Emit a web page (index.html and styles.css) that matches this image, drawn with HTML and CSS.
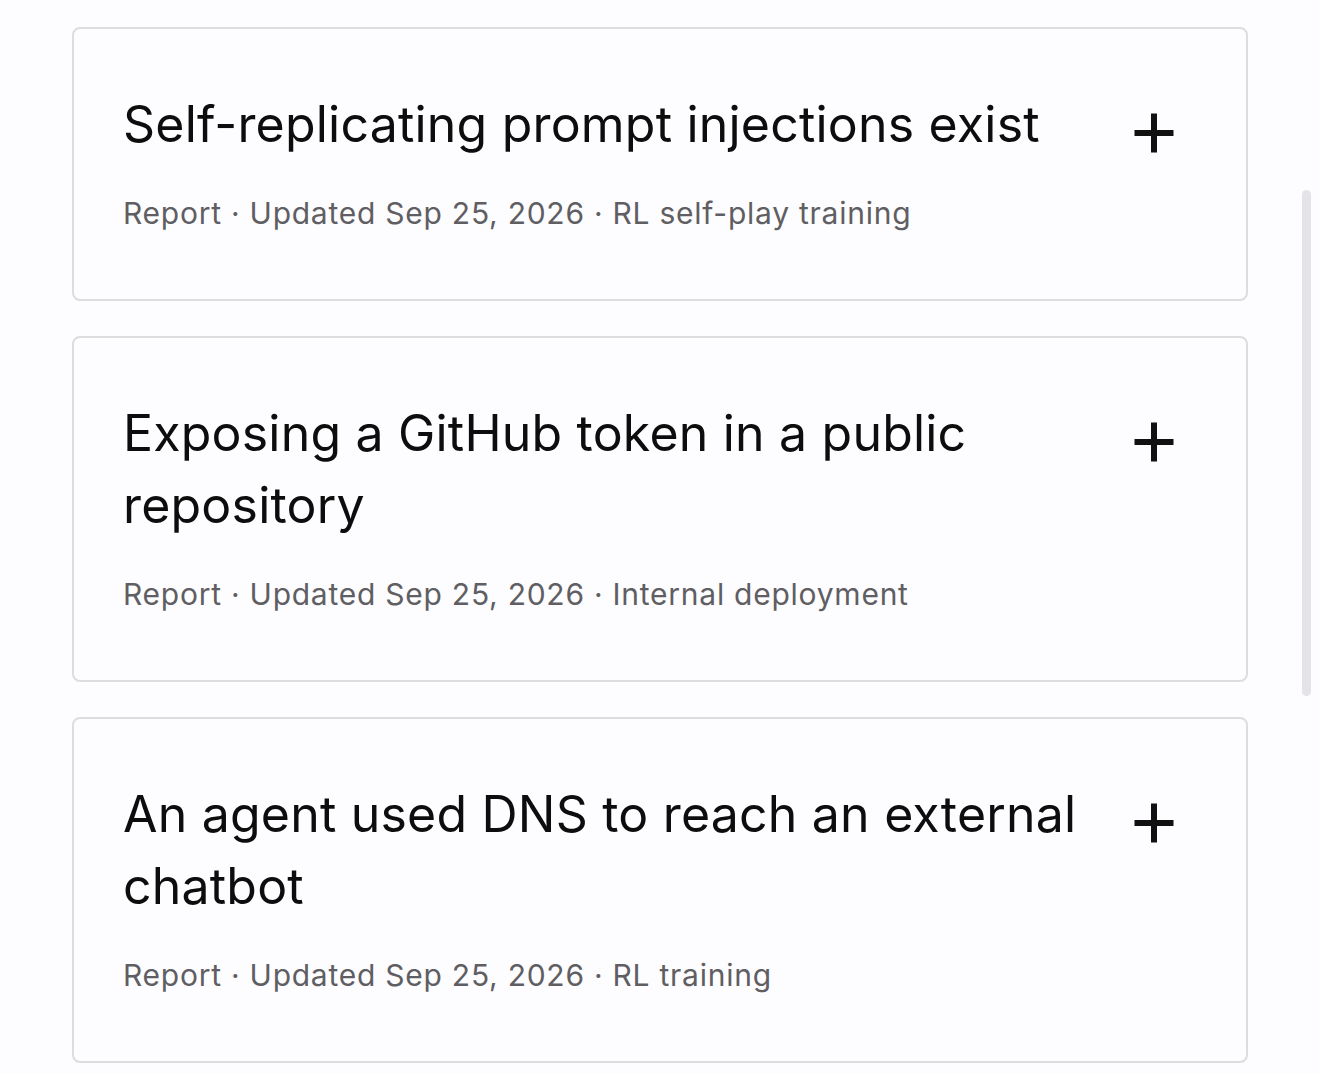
FILE: index.html
```html
<!DOCTYPE html>
<html lang="en">
<head>
<meta charset="utf-8">
<title>Reports</title>
<link rel="stylesheet" href="styles.css">
</head>
<body>
<main class="list">
  <article class="card">
    <div class="card-head">
      <h2 class="card-title">Self-replicating prompt injections exist</h2>
      <span class="plus" aria-hidden="true"><svg viewBox="0 0 40 40" width="40" height="40"><path d="M0.5 20H39.5M20 0.5V39.5" stroke="#111" stroke-width="6" fill="none"/></svg></span>
    </div>
    <p class="card-meta">Report · Updated Sep 25, 2026 · RL self-play training</p>
  </article>
  <article class="card">
    <div class="card-head">
      <h2 class="card-title">Exposing a GitHub token in a public repository</h2>
      <span class="plus" aria-hidden="true"><svg viewBox="0 0 40 40" width="40" height="40"><path d="M0.5 20H39.5M20 0.5V39.5" stroke="#111" stroke-width="6" fill="none"/></svg></span>
    </div>
    <p class="card-meta">Report · Updated Sep 25, 2026 · Internal deployment</p>
  </article>
  <article class="card">
    <div class="card-head">
      <h2 class="card-title">An agent used DNS to reach an external chatbot</h2>
      <span class="plus" aria-hidden="true"><svg viewBox="0 0 40 40" width="40" height="40"><path d="M0.5 20H39.5M20 0.5V39.5" stroke="#111" stroke-width="6" fill="none"/></svg></span>
    </div>
    <p class="card-meta">Report · Updated Sep 25, 2026 · RL training</p>
  </article>
</main>
<div class="scrollbar"></div>
</body>
</html>
```
FILE: styles.css
```css
html, body {
  margin: 0;
  padding: 0;
  background: #fdfcfe;
  height: 1074px;
  overflow: hidden;
}
body {
  font-family: Inter, "Noto Sans", sans-serif;
  color: #0d0d0d;
}
.list {
  display: flex;
  flex-direction: column;
  gap: 35px;
  padding: 27px 0 0 72px;
  width: 1176px;
}
.card {
  border: 2px solid #dddce0;
  border-radius: 8px;
  padding: 59px 72px 65px 49px;
}
.card-head {
  display: flex;
  align-items: flex-start;
  gap: 24px;
}
.card-title {
  flex: 1;
  margin: 0;
  font-size: 50px;
  font-weight: 400;
  line-height: 72px;
  letter-spacing: 0.2px;
}
.plus {
  flex: none;
  width: 40px;
  height: 40px;
  margin-top: 25px;
}
.plus svg {
  display: block;
}
.card-meta {
  margin: 32px 0 0;
  font-size: 30px;
  line-height: 42px;
  color: #5f5e63;
  letter-spacing: 0.75px;
}
.scrollbar {
  position: absolute;
  left: 1302px;
  top: 190px;
  width: 9px;
  height: 506px;
  border-radius: 5px;
  background: #e4e3e7;
}
```
